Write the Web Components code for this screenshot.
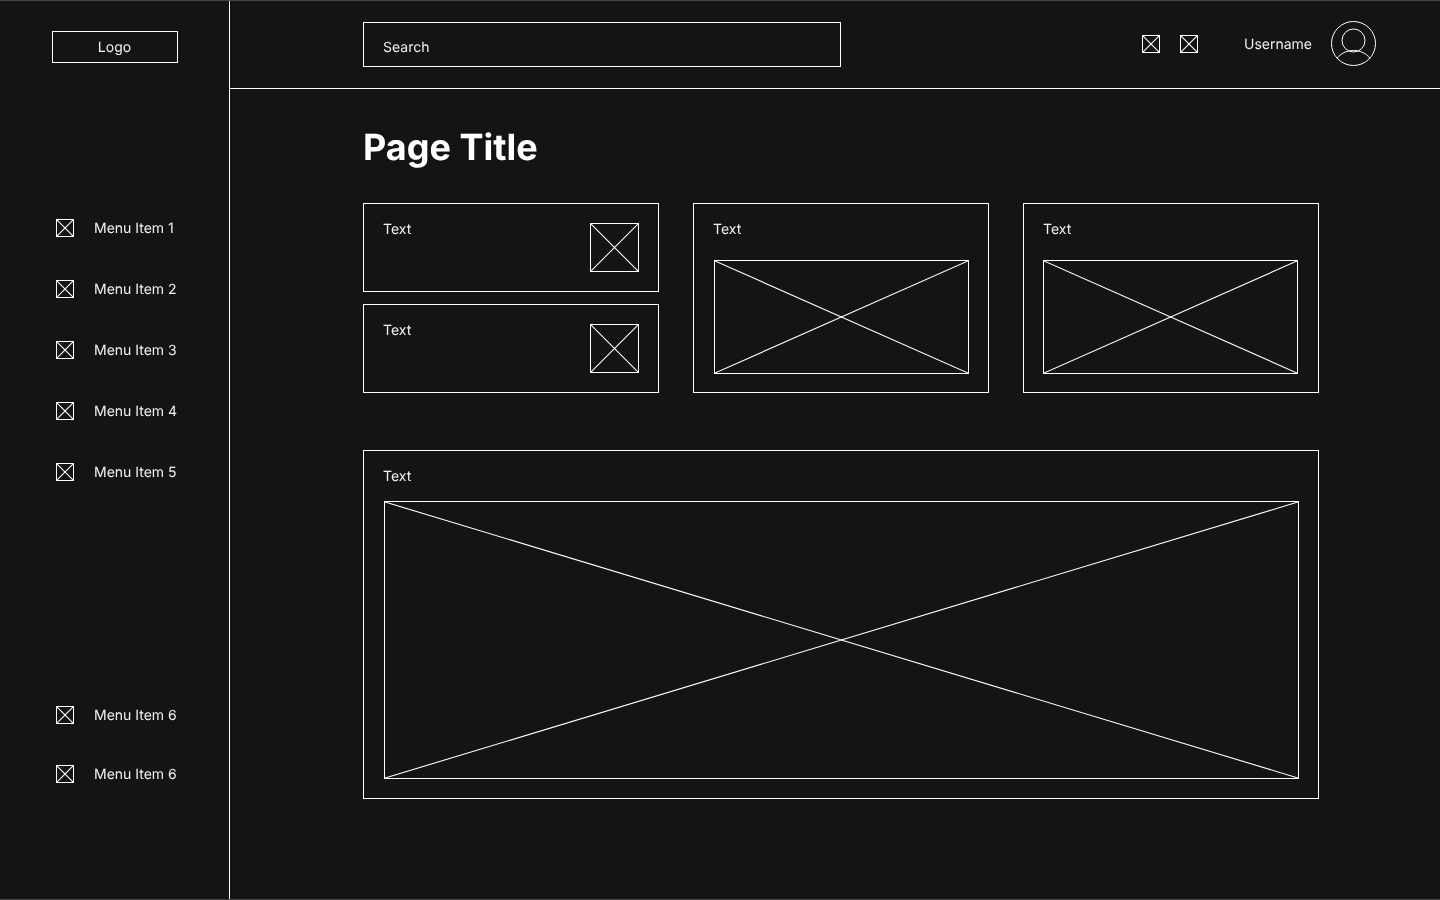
<!DOCTYPE html>
<html>
<head>
<meta charset="utf-8">
<title>Wireframe</title>
<style>
  html, body { margin: 0; height: 100%; background: #141414; }
  body { font-family: Inter, "Liberation Sans", sans-serif; color: #f0f0f0; text-rendering: geometricPrecision; }
</style>
</head>
<body>
<app-shell>
  <side-bar slot="side">
    <menu-item>Menu Item 1</menu-item>
    <menu-item>Menu Item 2</menu-item>
    <menu-item>Menu Item 3</menu-item>
    <menu-item>Menu Item 4</menu-item>
    <menu-item>Menu Item 5</menu-item>
    <menu-item slot="bottom">Menu Item 6</menu-item>
    <menu-item slot="bottom">Menu Item 6</menu-item>
  </side-bar>
  <top-bar slot="top"></top-bar>
  <dash-board></dash-board>
</app-shell>

<script>
// placeholder box with the crossed lines
class XBox extends HTMLElement {
  constructor() {
    super();
    this.attachShadow({ mode: 'open' });
    this.shadowRoot.innerHTML = `
      <style>
        :host { display: block; box-sizing: border-box; border: 1px solid #fff; flex: none; }
        svg { display: block; width: 100%; height: 100%; }
        line { stroke: #fff; stroke-width: 1.1; vector-effect: non-scaling-stroke; }
      </style>
      <svg viewBox="0 0 100 100" preserveAspectRatio="none">
        <line x1="0" y1="0" x2="100" y2="100"></line>
        <line x1="100" y1="0" x2="0" y2="100"></line>
      </svg>
    `;
  }
}
customElements.define('x-box', XBox);

class AppShell extends HTMLElement {
  constructor() {
    super();
    this.attachShadow({ mode: 'open' });
    // own layer, so the text gets grey antialiasing like the reference
    this.shadowRoot.innerHTML = `
      <style>
        :host {
          display: grid;
          grid-template-columns: 230px 1fr;
          grid-template-rows: 88px 1fr;
          height: 900px;
          box-sizing: border-box;
          border-top: 1px solid #444;
          border-bottom: 1px solid #444;
          will-change: transform;
        }
        .side { grid-row: 1 / 3; display: flex; min-height: 0; }
        .top { display: block; }
        .main { display: block; min-height: 0; }
      </style>
      <div class="side"><slot name="side"></slot></div>
      <div class="top"><slot name="top"></slot></div>
      <div class="main"><slot></slot></div>
    `;
  }
}
customElements.define('app-shell', AppShell);

class SideBar extends HTMLElement {
  constructor() {
    super();
    this.attachShadow({ mode: 'open' });
    this.shadowRoot.innerHTML = `
      <style>
        :host {
          display: flex;
          flex-direction: column;
          box-sizing: border-box;
          width: 230px;
          border-right: 1px solid #fff;
          padding: 30px 0 0 52px;
        }
        .logo {
          box-sizing: border-box;
          width: 126px;
          height: 32px;
          border: 1px solid #fff;
          padding-right: 1px;
          display: flex;
          align-items: center;
          justify-content: center;
          font-size: 14px;
        }
        .items { display: flex; flex-direction: column; gap: 43px; margin-top: 156px; }
        .bottom { display: flex; flex-direction: column; gap: 41px; margin-top: 225px; }
      </style>
      <div class="logo">Logo</div>
      <div class="items"><slot></slot></div>
      <div class="bottom"><slot name="bottom"></slot></div>
    `;
  }
}
customElements.define('side-bar', SideBar);

class MenuItem extends HTMLElement {
  constructor() {
    super();
    this.attachShadow({ mode: 'open' });
    this.shadowRoot.innerHTML = `
      <style>
        :host {
          display: flex;
          align-items: flex-start;
          gap: 20px;
          height: 18px;
          padding-left: 4px;
          font-size: 14px;
          line-height: 18px;
        }
        x-box { width: 18px; height: 18px; }
        span { margin-top: 1px; }
      </style>
      <x-box></x-box>
      <span><slot></slot></span>
    `;
  }
}
customElements.define('menu-item', MenuItem);

class TopBar extends HTMLElement {
  constructor() {
    super();
    this.attachShadow({ mode: 'open' });
    this.shadowRoot.innerHTML = `
      <style>
        :host {
          display: flex;
          align-items: flex-start;
          box-sizing: border-box;
          height: 88px;
          border-bottom: 1px solid #fff;
          padding: 0 64px 0 133px;
          font-size: 14px;
          line-height: 18px;
        }
        .search {
          box-sizing: border-box;
          width: 478px;
          height: 45px;
          margin-top: 21px;
          border: 1px solid #fff;
          padding: 6px 19px 0;
          display: flex;
          align-items: center;
        }
        .icons { display: flex; gap: 20px; margin: 34px 0 0 auto; }
        x-box { width: 18px; height: 18px; }
        .name { margin: 35px 19px 0 46px; }
        svg { display: block; width: 45px; height: 45px; flex: none; margin-top: 20px; }
        circle, path { fill: none; stroke: #fff; stroke-width: 1; }
      </style>
      <div class="search">Search</div>
      <div class="icons"><x-box></x-box><x-box></x-box></div>
      <span class="name">Username</span>
      <svg viewBox="0 0 45 45">
        <circle cx="22.5" cy="22.5" r="22"></circle>
        <circle cx="22.5" cy="19.5" r="11.5"></circle>
        <path d="M6 37.5C9.5 32.5 15.5 29.5 22.5 29.5S35.5 32.5 39 37.5"></path>
      </svg>
    `;
  }
}
customElements.define('top-bar', TopBar);

// bordered card: a label plus a picture below it, or beside it with the beside attribute
class InfoCard extends HTMLElement {
  constructor() {
    super();
    this.attachShadow({ mode: 'open' });
    this.shadowRoot.innerHTML = `
      <style>
        :host {
          display: block;
          box-sizing: border-box;
          border: 1px solid #fff;
          padding: 17px 19px 0;
          font-size: 14px;
          line-height: 18px;
        }
        :host([beside]) { display: flex; justify-content: space-between; align-items: flex-start; }
      </style>
      <div>Text</div>
      <slot></slot>
    `;
  }
}
customElements.define('info-card', InfoCard);

class DashBoard extends HTMLElement {
  constructor() {
    super();
    this.attachShadow({ mode: 'open' });
    this.shadowRoot.innerHTML = `
      <style>
        :host { display: block; padding: 0 0 0 133px; }
        h1 { margin: 36px 0 0; font-size: 36px; line-height: 44px; font-weight: 650; color: #fff; }
        .row {
          display: grid;
          grid-template-columns: repeat(3, 296px);
          column-gap: 34px;
          height: 190px;
          margin-top: 34px;
        }
        .stack { display: grid; grid-template-rows: 89px 89px; row-gap: 12px; }
        .side-pic { width: 49px; height: 49px; margin-top: 2px; }
        .wide-pic { width: 255px; height: 114px; margin: 21px 0 0 1px; }
        .wide-pic.flush { margin-left: 0; }
        .big { width: 956px; height: 349px; margin-top: 57px; }
        .big-pic { width: 915px; height: 278px; margin: 15px 0 0 1px; }
      </style>
      <h1>Page Title</h1>
      <div class="row">
        <div class="stack">
          <info-card beside><x-box class="side-pic"></x-box></info-card>
          <info-card beside><x-box class="side-pic"></x-box></info-card>
        </div>
        <info-card><x-box class="wide-pic"></x-box></info-card>
        <info-card><x-box class="wide-pic flush"></x-box></info-card>
      </div>
      <info-card class="big"><x-box class="big-pic"></x-box></info-card>
    `;
  }
}
customElements.define('dash-board', DashBoard);
</script>
</body>
</html>
